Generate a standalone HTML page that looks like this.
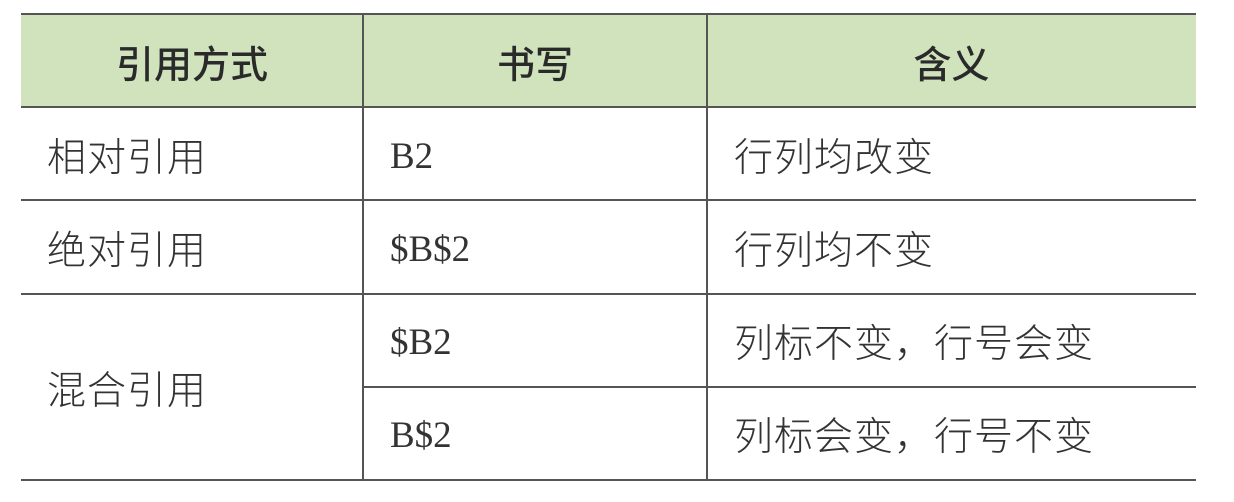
<!DOCTYPE html>
<html><head><meta charset="utf-8"><style>
body{margin:0;width:1234px;height:502px;background:#fff;position:relative;overflow:hidden;font-family:"Liberation Serif","Noto Sans CJK SC",serif;color:#333}
.h{position:absolute;left:21px;top:14px;width:1175px;height:93px;background:#d0e3bc}
.l{position:absolute;background:#555;height:2px}
.v{position:absolute;background:#555;width:2px}
.t{position:absolute;font-size:39px;line-height:44px;letter-spacing:1px;font-family:"Noto Sans CJK SC",sans-serif;font-weight:300;color:#333}
.hd{font-weight:500;color:#2a2a2a;text-align:center;font-size:38px;letter-spacing:0}
.s{font-family:"Liberation Serif",serif;font-weight:normal;font-size:37px;letter-spacing:0}
</style></head><body>
<div class="h"></div>
<div class="l" style="left:21px;width:1175px;top:13px"></div>
<div class="l" style="left:21px;width:1175px;top:106px"></div>
<div class="l" style="left:21px;width:1175px;top:199px"></div>
<div class="l" style="left:21px;width:1175px;top:293px"></div>
<div class="l" style="left:363px;width:833px;top:386px"></div>
<div class="l" style="left:21px;width:1175px;top:479px"></div>
<div class="v" style="left:362px;top:13px;height:468px"></div>
<div class="v" style="left:706px;top:13px;height:468px"></div>
<div class="t hd" style="left:21px;width:342px;top:40px">引用方式</div>
<div class="t hd" style="left:363px;width:344px;top:40px">书写</div>
<div class="t hd" style="left:707px;width:489px;top:40px">含义</div>
<div class="t" style="left:47px;top:133px">相对引用</div>
<div class="t" style="left:47px;top:226px">绝对引用</div>
<div class="t" style="left:47px;top:366px">混合引用</div>
<div class="t s" style="left:390px;top:135px">B2</div>
<div class="t s" style="left:390px;top:228px">$B$2</div>
<div class="t s" style="left:390px;top:321px">$B2</div>
<div class="t s" style="left:390px;top:414px">B$2</div>
<div class="t" style="left:734px;top:133px">行列均改变</div>
<div class="t" style="left:734px;top:226px">行列均不变</div>
<div class="t" style="left:734px;top:319px">列标不变，行号会变</div>
<div class="t" style="left:734px;top:412px">列标会变，行号不变</div>
</body></html>
